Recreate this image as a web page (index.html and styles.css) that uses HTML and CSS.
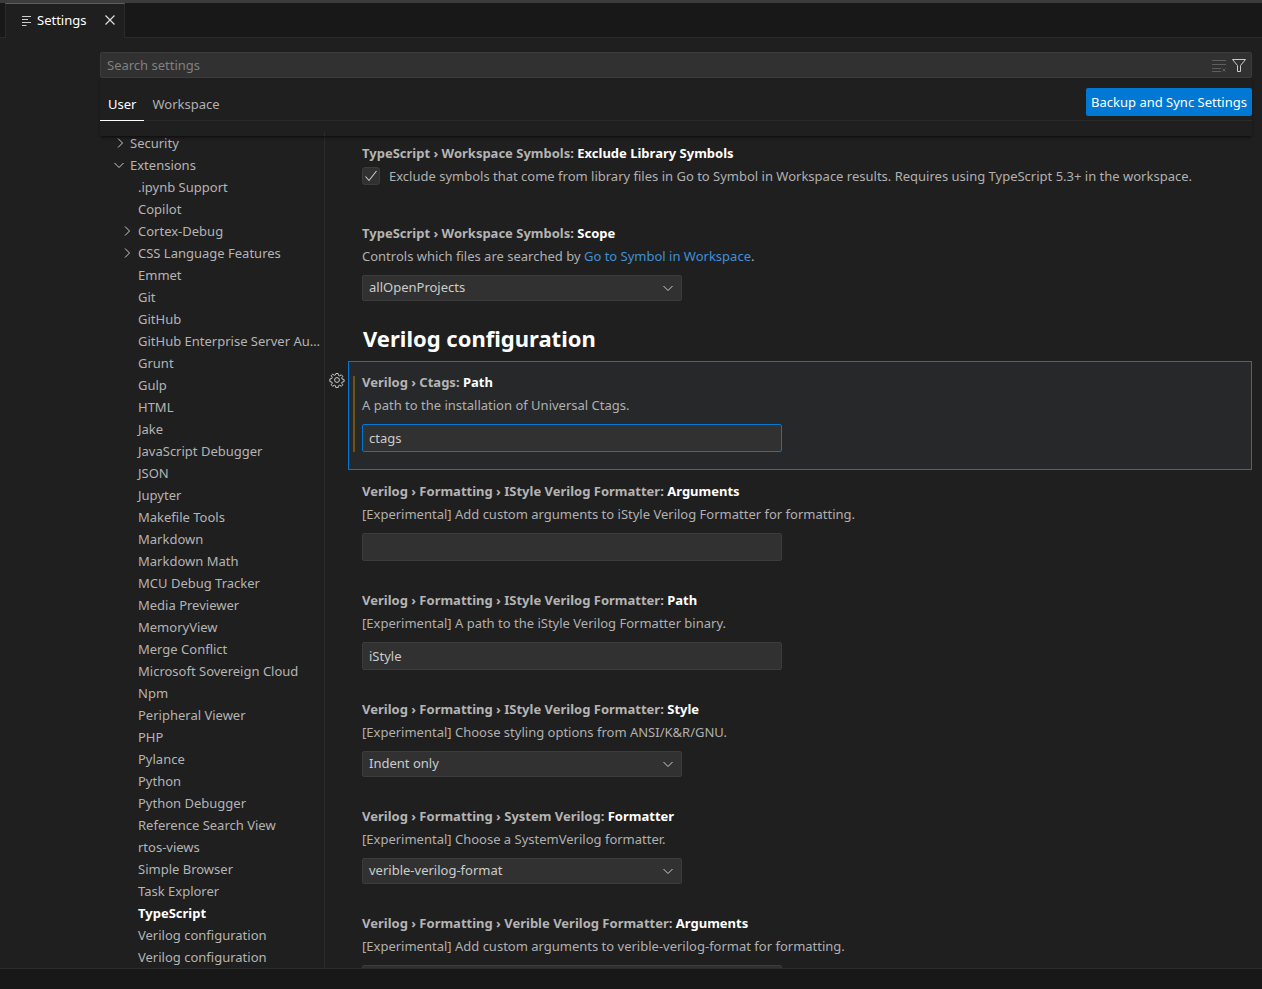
FILE: index.html
```html
<!DOCTYPE html>
<html>
<head>
	<meta http-equiv="Content-Type" content="text/html; charset=utf-8" />
	<title>Settings</title>
	<link rel="stylesheet" href="styles.css">
</head>

<body>
	<div class="tabs">
		<div class="tab">
			<svg class="tab_icon" width="16" height="16" viewBox="0 0 16 16"><path d="M1 4.500h9M1 7.500h6M1 10.500h9M1 13.500h4.500" stroke="#ccc" fill="none"/></svg>
			<span>Settings</span>
			<svg class="tab_close" width="16" height="16" viewBox="0 0 16 16"><path d="M3.500 3.500l9 9M12.500 3.500l-9 9" stroke="#ddd" stroke-width="1.200" fill="none"/></svg>
		</div>
	</div>

	<div class="editor">
		<div class="search">
			<span class="search_text">Search settings</span>
			<svg width="16" height="16" viewBox="0 0 16 16"><path d="M1 3.500h14M1 7.500h14M1 11.500h9M1 14.500h9M11.500 11.500l3 3M14.500 11.500l-3 3" stroke="#5e5e5e" fill="none"/></svg>
			<svg width="16" height="16" viewBox="0 0 16 16"><path d="M1.500 2.500h13L9.500 8.500v6h-3v-6z" stroke="#ccc" fill="none"/></svg>
		</div>

		<div class="header">
			<div class="scope scope_on">User</div>
			<div class="scope">Workspace</div>
			<div class="sync">Backup and Sync Settings</div>
		</div>

		<div class="main">
			<div class="toc">
				<div class="toc_row lvl1"><svg class="chev" width="16" height="16" viewBox="0 0 16 16"><path d="M6 3.500l4.500 4.500L6 12.500" stroke="#ccc" fill="none"/></svg>Security</div>
				<div class="toc_row lvl1"><svg class="chev chev_open" width="16" height="16" viewBox="0 0 16 16"><path d="M3.500 6l4.500 4.500L12.500 6" stroke="#ccc" fill="none"/></svg>Extensions</div>
				<div class="toc_row">.ipynb Support</div>
				<div class="toc_row">Copilot</div>
				<div class="toc_row"><svg class="chev" width="16" height="16" viewBox="0 0 16 16"><path d="M6 3.500l4.500 4.500L6 12.500" stroke="#ccc" fill="none"/></svg>Cortex-Debug</div>
				<div class="toc_row"><svg class="chev" width="16" height="16" viewBox="0 0 16 16"><path d="M6 3.500l4.500 4.500L6 12.500" stroke="#ccc" fill="none"/></svg>CSS Language Features</div>
				<div class="toc_row">Emmet</div>
				<div class="toc_row">Git</div>
				<div class="toc_row">GitHub</div>
				<div class="toc_row">GitHub Enterprise Server Authentication</div>
				<div class="toc_row">Grunt</div>
				<div class="toc_row">Gulp</div>
				<div class="toc_row">HTML</div>
				<div class="toc_row">Jake</div>
				<div class="toc_row">JavaScript Debugger</div>
				<div class="toc_row">JSON</div>
				<div class="toc_row">Jupyter</div>
				<div class="toc_row">Makefile Tools</div>
				<div class="toc_row">Markdown</div>
				<div class="toc_row">Markdown Math</div>
				<div class="toc_row">MCU Debug Tracker</div>
				<div class="toc_row">Media Previewer</div>
				<div class="toc_row">MemoryView</div>
				<div class="toc_row">Merge Conflict</div>
				<div class="toc_row">Microsoft Sovereign Cloud</div>
				<div class="toc_row">Npm</div>
				<div class="toc_row">Peripheral Viewer</div>
				<div class="toc_row">PHP</div>
				<div class="toc_row">Pylance</div>
				<div class="toc_row">Python</div>
				<div class="toc_row">Python Debugger</div>
				<div class="toc_row">Reference Search View</div>
				<div class="toc_row">rtos-views</div>
				<div class="toc_row">Simple Browser</div>
				<div class="toc_row">Task Explorer</div>
				<div class="toc_row toc_on">TypeScript</div>
				<div class="toc_row">Verilog configuration</div>
				<div class="toc_row">Verilog configuration</div>
			</div>

			<div class="list">
				<div class="item item_first">
					<div class="item_title">TypeScript › Workspace Symbols: <b>Exclude Library Symbols</b></div>
					<div class="item_check">
						<span class="check"><svg width="16" height="16" viewBox="0 0 16 16"><path d="M2.500 8.500l3.500 4 7.500-9.500" stroke="#ccc" stroke-width="1.100" fill="none"/></svg></span>
						<span class="item_desc">Exclude symbols that come from library files in Go to Symbol in Workspace results. Requires using TypeScript 5.3+ in the workspace.</span>
					</div>
				</div>

				<div class="item">
					<div class="item_title">TypeScript › Workspace Symbols: <b>Scope</b></div>
					<div class="item_desc">Controls which files are searched by <a class="link">Go to Symbol in Workspace</a>.</div>
					<div class="select"><span class="select_text">allOpenProjects</span><svg width="16" height="16" viewBox="0 0 16 16"><path d="M3.500 6l4.500 4.500L12.500 6" stroke="#ccc" fill="none"/></svg></div>
				</div>

				<h2 class="group">Verilog configuration</h2>

				<div class="item item_focus">
					<svg class="gear" width="16" height="16" viewBox="0 0 16 16"><path d="M6.900 1.500h2.200l.4 1.900 1.200.5 1.600-1.100 1.500 1.500-1.100 1.600.5 1.200 1.900.4v2.100l-1.900.4-.5 1.200 1.100 1.600-1.500 1.500-1.600-1.100-1.200.5-.4 1.900H6.900l-.4-1.900-1.200-.5-1.600 1.100-1.500-1.500 1.100-1.600-.5-1.200-1.900-.4V6.900l1.900-.4.5-1.200-1.100-1.600 1.500-1.500 1.600 1.100 1.200-.5z" stroke="#ccc" fill="none"/><circle cx="8" cy="8" r="2.400" stroke="#ccc" fill="none"/></svg>
					<div class="modified"></div>
					<div class="item_title">Verilog › Ctags: <b>Path</b></div>
					<div class="item_desc">A path to the installation of Universal Ctags.</div>
					<div class="input input_focus">ctags</div>
				</div>

				<div class="item">
					<div class="item_title">Verilog › Formatting › IStyle Verilog Formatter: <b>Arguments</b></div>
					<div class="item_desc">[Experimental] Add custom arguments to iStyle Verilog Formatter for formatting.</div>
					<div class="input"></div>
				</div>

				<div class="item">
					<div class="item_title">Verilog › Formatting › IStyle Verilog Formatter: <b>Path</b></div>
					<div class="item_desc">[Experimental] A path to the iStyle Verilog Formatter binary.</div>
					<div class="input">iStyle</div>
				</div>

				<div class="item">
					<div class="item_title">Verilog › Formatting › IStyle Verilog Formatter: <b>Style</b></div>
					<div class="item_desc">[Experimental] Choose styling options from ANSI/K&amp;R/GNU.</div>
					<div class="select"><span class="select_text">Indent only</span><svg width="16" height="16" viewBox="0 0 16 16"><path d="M3.500 6l4.500 4.500L12.500 6" stroke="#ccc" fill="none"/></svg></div>
				</div>

				<div class="item">
					<div class="item_title">Verilog › Formatting › System Verilog: <b>Formatter</b></div>
					<div class="item_desc">[Experimental] Choose a SystemVerilog formatter.</div>
					<div class="select"><span class="select_text">verible-verilog-format</span><svg width="16" height="16" viewBox="0 0 16 16"><path d="M3.500 6l4.500 4.500L12.500 6" stroke="#ccc" fill="none"/></svg></div>
				</div>

				<div class="item">
					<div class="item_title">Verilog › Formatting › Verible Verilog Formatter: <b>Arguments</b></div>
					<div class="item_desc">[Experimental] Add custom arguments to verible-verilog-format for formatting.</div>
					<div class="input"></div>
				</div>
			</div>
		</div>
	</div>

	<div class="status"></div>
</body>
</html>
```

FILE: styles.css
```css
html, body {
	height: 100%;
}

body {
	margin: 0;
	display: flex;
	flex-direction: column;
	overflow: hidden;
	background-color: #1f1f1f;
	border-top: 3px solid #3c3c3c;
	box-sizing: border-box;
	font-family: "Noto Sans", sans-serif;
	font-size: 13px;
	color: #cccccc;
}

.tabs {
	display: flex;
	flex: none;
	height: 35px;
	padding-left: 5px;
	background-color: #181818;
	border-bottom: 1px solid #2b2b2b;
	box-sizing: border-box;
}

.tab {
	display: flex;
	align-items: center;
	width: 120px;
	height: 35px;
	padding-left: 15px;
	padding-bottom: 2px;
	box-sizing: border-box;
	background-color: #1f1f1f;
	border-top: 1px solid #0078d4;
	border-right: 1px solid #2b2b2b;
	border-left: 1px solid #2b2b2b;
	color: #ffffff;
}

.tab span {
	flex: 1;
}

.tab_close {
	margin-right: 6px;
}

.editor {
	display: flex;
	flex: 1;
	flex-direction: column;
	min-height: 0;
	padding: 14px 10px 0 100px;
}

.search {
	display: flex;
	flex: none;
	align-items: center;
	gap: 4px;
	height: 26px;
	padding: 0 5px 0 7px;
	background-color: #313131;
	border-radius: 2px;
	outline: 1px solid #3c3c3c;
	outline-offset: -1px;
}

.search_text {
	flex: 1;
	color: #808080;
}

.header {
	display: flex;
	flex: none;
	height: 58px;
	box-sizing: border-box;
	position: relative;
	z-index: 1;
	padding-top: 10px;
	box-shadow: 0 2px 3px -1px #0b0b0b;
}

.header::after {
	content: "";
	position: absolute;
	left: 0;
	right: 0;
	top: 42px;
	height: 1px;
	background-color: #2b2b2b;
}

.scope {
	height: 33px;
	line-height: 33px;
	padding: 0 8px;
	color: #b0b0b0;
	box-sizing: border-box;
}

.scope_on {
	position: relative;
	z-index: 1;
	color: #ffffff;
	border-bottom: 1px solid #ffffff;
}

.sync {
	margin-left: auto;
	align-self: flex-start;
	height: 28px;
	line-height: 28px;
	padding: 0 5px;
	background-color: #0078d4;
	border-radius: 2px;
	color: #ffffff;
}

.main {
	display: flex;
	flex: 1;
	min-height: 0;
	overflow: hidden;
	margin-top: -4px;
}

.toc {
	flex: none;
	box-sizing: border-box;
	width: 225px;
	border-right: 1px solid #2b2b2b;
	overflow: hidden;
}

.toc_row {
	position: relative;
	height: 22px;
	line-height: 22px;
	padding-left: 38px;
	white-space: nowrap;
	overflow: hidden;
	text-overflow: ellipsis;
	color: #b4b4b4;
}

.toc_row.lvl1 {
	padding-left: 30px;
}

.toc_on {
	color: #ffffff;
	font-weight: 700;
}

.chev {
	position: absolute;
	left: 19px;
	top: 3px;
}

.lvl1 .chev {
	left: 12px;
}

.lvl1 .chev_open {
	left: 11px;
}

.list {
	flex: 1;
	min-width: 0;
	padding-left: 23px;
	overflow: hidden;
}

.item {
	position: relative;
	padding: 10px 14px 18px;
}

.item_first {
	height: 80px;
	box-sizing: border-box;
}

.item_title {
	height: 22px;
	line-height: 22px;
	font-weight: 700;
	color: #b4b4b4;
}

.item_title b {
	font-weight: 700;
	color: #ffffff;
}

.item_desc {
	height: 22px;
	line-height: 22px;
	margin-top: 1px;
	color: #b0b0b0;
}

.item_check {
	display: flex;
	align-items: center;
	margin-top: 1px;
}

.item_check .item_desc {
	margin-top: 0;
	margin-left: 9px;
}

.check {
	display: flex;
	align-items: center;
	justify-content: center;
	width: 18px;
	height: 18px;
	background-color: #313131;
	border: 1px solid #3c3c3c;
	border-radius: 3px;
	box-sizing: border-box;
}

.link {
	color: #4090d8;
}

.select {
	display: flex;
	align-items: center;
	justify-content: space-between;
	width: 320px;
	height: 26px;
	margin-top: 8px;
	padding: 0 5px 0 6px;
	box-sizing: border-box;
	background-color: #313131;
	border: 1px solid #3c3c3c;
	border-radius: 2px;
}

.select_text {
	margin-top: -2px;
}

.input {
	width: 420px;
	height: 28px;
	line-height: 26px;
	margin-top: 8px;
	padding: 0 6px;
	box-sizing: border-box;
	background-color: #313131;
	border: 1px solid #3c3c3c;
	border-radius: 2px;
}

.input_focus {
	border-color: #0078d4;
}

.group {
	height: 42px;
	margin: 0;
	padding-left: 15px;
	box-sizing: border-box;
	line-height: 38px;
	font-size: 22px;
	font-weight: 700;
	color: #ffffff;
}

.item_focus {
	padding-top: 9px;
	padding-left: 13px;
	padding-bottom: 17px;
	border: 1px solid #0078d4;
	background-color: #26282a;
}

.gear {
	position: absolute;
	left: -20px;
	top: 10px;
}

.modified {
	position: absolute;
	left: 4px;
	top: 14px;
	width: 2px;
	height: 76px;
	background-color: #6b5518;
}

.status {
	flex: none;
	height: 21px;
	background-color: #181818;
	border-top: 1px solid #2b2b2b;
	box-sizing: border-box;
}
```
